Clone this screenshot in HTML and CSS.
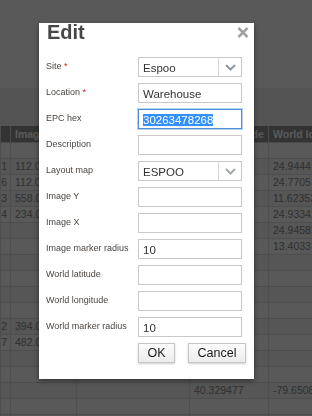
FILE: index.html
```html
<!DOCTYPE html>
<html lang="en">
<head>
  <meta charset="utf-8">
  <meta name="viewport" content="width=device-width, initial-scale=1.0">
  <title>Locations</title>
  <link rel="stylesheet" href="styles.css">
</head>
<body>
  <div class="page">
    <div class="toolbar"></div>
    <div class="filter-bar"></div>
    <table class="grid">
      <colgroup>
        <col class="c0"><col class="c1"><col class="c2"><col class="c3"><col class="c4">
      </colgroup>
      <thead>
        <tr><th></th><th>Image Y</th><th>Image X</th><th>World latitude</th><th>World longitude</th></tr>
      </thead>
      <tbody>
        <tr><td></td><td></td><td></td><td></td><td></td></tr>
        <tr><td class="num">1</td><td>112.0</td><td></td><td></td><td>24.94441</td></tr>
        <tr><td class="num">6</td><td>112.0</td><td></td><td></td><td>24.77051</td></tr>
        <tr><td class="num">3</td><td>558.0</td><td></td><td></td><td>11.62353</td></tr>
        <tr><td class="num">4</td><td>234.0</td><td></td><td></td><td>24.93342</td></tr>
        <tr><td></td><td></td><td></td><td></td><td>24.94582</td></tr>
        <tr><td></td><td></td><td></td><td></td><td>13.40331</td></tr>
        <tr><td></td><td></td><td></td><td></td><td></td></tr>
        <tr><td></td><td></td><td></td><td></td><td></td></tr>
        <tr><td></td><td></td><td></td><td></td><td></td></tr>
        <tr><td></td><td></td><td></td><td></td><td></td></tr>
        <tr><td class="num">2</td><td>394.0</td><td></td><td></td><td></td></tr>
        <tr><td class="num">7</td><td>482.0</td><td></td><td></td><td></td></tr>
        <tr><td></td><td></td><td></td><td></td><td></td></tr>
        <tr><td></td><td></td><td></td><td></td><td></td></tr>
        <tr><td></td><td></td><td></td><td>40.329477</td><td>-79.65081</td></tr>
        <tr><td></td><td></td><td></td><td></td><td></td></tr>
        <tr><td></td><td></td><td></td><td></td><td></td></tr>
      </tbody>
    </table>
  </div>

  <div class="backdrop"></div>

  <div class="dialog" role="dialog" aria-labelledby="dlgTitle">
    <h1 id="dlgTitle" class="dialog-title">Edit</h1>
    <button class="close" aria-label="Close">
      <svg width="12" height="11" viewBox="0 0 12 11"><path d="M1.5 1 L10.5 10 M10.5 1 L1.5 10" stroke="#a2a2a2" stroke-width="2.6" fill="none"/></svg>
    </button>

    <div class="form">
      <label>Site <span class="req">*</span></label>
      <div class="field select">Espoo<span class="arrow"><svg width="11" height="7" viewBox="0 0 11 7"><path d="M1 1 L5.5 5.5 L10 1" stroke="#8e98a3" stroke-width="2" fill="none"/></svg></span></div>

      <label>Location <span class="req">*</span></label>
      <div class="field">Warehouse</div>

      <label>EPC hex</label>
      <div class="field focused"><span class="selected">30263478268</span></div>

      <label>Description</label>
      <div class="field"></div>

      <label>Layout map</label>
      <div class="field select">ESPOO<span class="arrow"><svg width="11" height="7" viewBox="0 0 11 7"><path d="M1 1 L5.5 5.5 L10 1" stroke="#a3a8ad" stroke-width="2" fill="none"/></svg></span></div>

      <label>Image Y</label>
      <div class="field"></div>

      <label>Image X</label>
      <div class="field"></div>

      <label>Image marker radius</label>
      <div class="field">10</div>

      <label>World latitude</label>
      <div class="field"></div>

      <label>World longitude</label>
      <div class="field"></div>

      <label>World marker radius</label>
      <div class="field">10</div>

      <span></span>
      <div class="actions">
        <button class="btn ok">OK</button>
        <button class="btn">Cancel</button>
      </div>
    </div>
  </div>
</body>
</html>
```

FILE: styles.css
```css
* {
  box-sizing: border-box;
  margin: 0;
  padding: 0;
}

body {
  font-family: "Liberation Sans", Arial, sans-serif;
  width: 312px;
  height: 416px;
  overflow: hidden;
  background: #fff;
}

/* page behind the modal */
.page {
  width: 312px;
  overflow: hidden;
}

.toolbar {
  height: 88px;
  background: #ffffff;
}

.filter-bar {
  height: 38px;
  background: #efefef;
}

.grid {
  table-layout: fixed;
  border-collapse: collapse;
  width: 370px;
  font-size: 10.5px;
  color: #8a8a8a;
}

.c0 { width: 10px; }
.c1 { width: 66px; }
.c2 { width: 113px; }
.c3 { width: 79px; }
.c4 { width: 102px; }

.grid th,
.grid td {
  height: 16px;
  padding: 0 4px;
  white-space: nowrap;
  overflow: hidden;
  text-align: left;
  border: 1px solid #dedede;
  border-top: none;
}

.grid th {
  background: #939393;
  color: #ffffff;
  font-weight: bold;
  font-size: 10.5px;
  border-color: #d8d8d8;
}

.grid td.num {
  padding: 0 3px 0 0;
  text-align: right;
}

.grid tbody tr:nth-child(even) td {
  background: #f6f6f6;
}

.grid tbody tr:nth-child(odd) td {
  background: #ffffff;
}

.backdrop {
  position: fixed;
  inset: 0;
  background: rgba(0, 0, 0, 0.65);
}

/* dialog */
.dialog {
  position: absolute;
  left: 39px;
  top: 23px;
  width: 215px;
  height: 356px;
  background: #fff;
  box-shadow: 0 2px 5px rgba(0, 0, 0, 0.45);
  overflow: hidden;
}

.dialog-title {
  font-size: 20px;
  line-height: 20px;
  font-weight: bold;
  color: #474747;
  margin: -1px 0 0 8px;
}

.close {
  position: absolute;
  top: 4px;
  right: 5px;
  border: none;
  background: none;
  line-height: 0;
}

.form {
  display: grid;
  grid-template-columns: 92px 104px;
  row-gap: 6px;
  margin: 15px 0 0 7px;
}

.form label {
  font-size: 9px;
  line-height: 18px;
  color: #4b4540;
  white-space: nowrap;
}

.req {
  color: #cc2222;
}

.field {
  position: relative;
  height: 20px;
  border: 1px solid #c9c9c9;
  padding: 2px 4px 0;
  font-size: 11.5px;
  line-height: 17px;
  color: #333;
  white-space: nowrap;
}

.field.focused {
  border-color: #4d8fd6;
  box-shadow: 0 0 0 1px #b6d2f0;
}

.selected {
  background: #3390ff;
  color: #fff;
}

.select .arrow {
  position: absolute;
  top: 0;
  right: 0;
  width: 23px;
  height: 18px;
  border-left: 1px solid #d6d6d6;
  display: flex;
  align-items: center;
  justify-content: center;
}

.actions {
  display: flex;
  gap: 13px;
  width: 108px;
}

.btn {
  height: 20px;
  font-family: "Liberation Sans", Arial, sans-serif;
  font-size: 12.5px;
  color: #1a1a1a;
  border: 1px solid #c6c6c6;
  background: linear-gradient(#fbfbfb, #ececec);
  box-shadow: 0 1px 2px rgba(0, 0, 0, 0.2);
}

.btn.ok {
  width: 37px;
}

.btn:not(.ok) {
  width: 58px;
}
```
